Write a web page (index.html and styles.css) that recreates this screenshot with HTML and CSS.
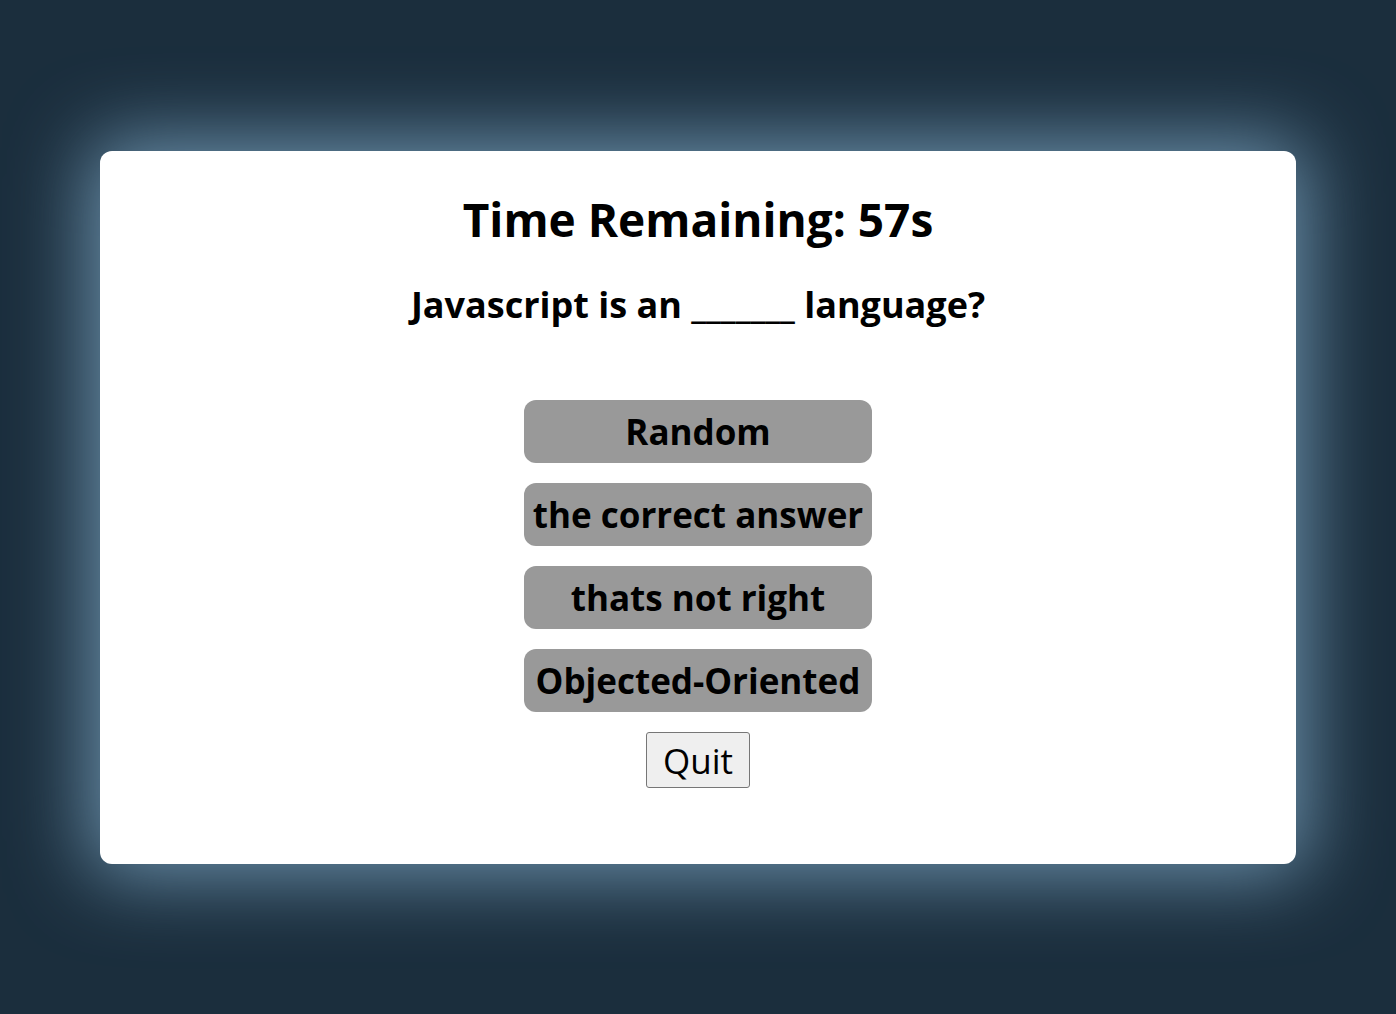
FILE: index.html
```html
<!DOCTYPE html>
<html lang="en">
<head>
<meta charset="utf-8">
<title>Quiz</title>
<link rel="stylesheet" href="styles.css">
</head>
<body>
<main class="card">
  <h1 class="timer">Time Remaining: 57s</h1>
  <h2 class="question">Javascript is an _______ language?</h2>
  <div class="answers">
    <button class="answer">Random</button>
    <button class="answer">the correct answer</button>
    <button class="answer">thats not right</button>
    <button class="answer">Objected-Oriented</button>
  </div>
  <button class="quit">Quit</button>
</main>
</body>
</html>
```
FILE: styles.css
```css
html, body {
  margin: 0;
  height: 100%;
}
body {
  background: #1b2e3d;
  display: flex;
  align-items: center;
  justify-content: center;
  font-family: "Open Sans", "Noto Sans", sans-serif;
  color: #000;
}
.card {
  box-sizing: border-box;
  width: 1196px;
  height: 713px;
  background: #fff;
  border-radius: 12px;
  box-shadow: 0 0 80px 10px #6f95b0;
  padding-top: 38px;
  display: flex;
  flex-direction: column;
  align-items: center;
}
.timer {
  margin: 0;
  font-size: 46px;
  line-height: 60px;
  font-weight: 700;
}
.question {
  margin: 36px 0 0;
  font-size: 36px;
  line-height: 40px;
  font-weight: 700;
}
.answers {
  margin-top: 75px;
  display: flex;
  flex-direction: column;
  gap: 20.3px;
}
.answer {
  width: 348px;
  height: 63px;
  padding: 0;
  border: none;
  border-radius: 12px;
  background: #999;
  color: #000;
  font-family: inherit;
  font-size: 35px;
  font-weight: 700;
  display: flex;
  align-items: center;
  justify-content: center;
}
.quit {
  margin-top: 20px;
  width: 104px;
  height: 56px;
  padding: 0;
  background: #efefef;
  border: 1px solid #767676;
  border-radius: 3px;
  color: #000;
  font-family: inherit;
  font-size: 35px;
  font-weight: 400;
}
```
